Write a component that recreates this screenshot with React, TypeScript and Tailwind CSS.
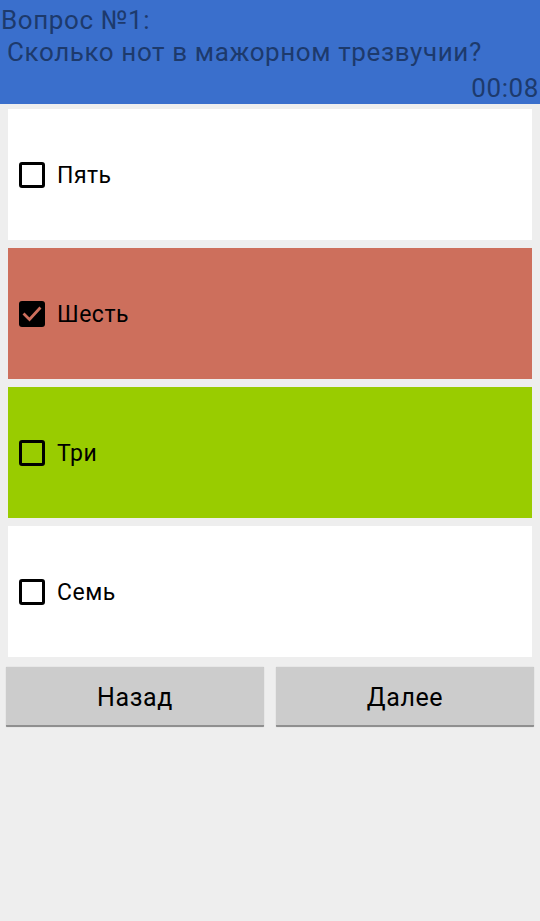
import React from "react";

type Opt = { label: string; bg: string; checked?: boolean };

const options: Opt[] = [
  { label: "Пять", bg: "bg-white" },
  { label: "Шесть", bg: "bg-[#cd6f5c]", checked: true },
  { label: "Три", bg: "bg-[#99cc00]" },
  { label: "Семь", bg: "bg-white" },
];

function Box({ checked }: { checked?: boolean }) {
  if (checked) {
    return (
      <div className="w-[26px] h-[26px] rounded-[3px] bg-black flex items-center justify-center shrink-0">
        <svg width="22" height="22" viewBox="0 0 22 22">
          <path d="M3.5 11.5 L8.5 16.5 L18.5 5.5" fill="none" stroke="#cd6f5c" strokeWidth="2.8" strokeLinecap="square" />
        </svg>
      </div>
    );
  }
  return <div className="w-[26px] h-[26px] rounded-[3px] border-[3px] border-black shrink-0" />;
}

export default function App() {
  return (
    <div className="w-[540px] h-[921px] bg-[#eeeeee] flex flex-col" style={{ fontFamily: "Roboto, 'Noto Sans', sans-serif" }}>
      <div className="h-[104px] bg-[#3a6fcc] text-[#1d3a6c] text-[26px] tracking-[0.6px] leading-[32px] pt-[4px] flex flex-col">
        <div className="pl-[1px]">Вопрос №1:</div>
        <div className="pl-[7px]">Сколько нот в мажорном трезвучии?</div>
        <div className="mt-[4px] text-right pr-[1px]">00:08</div>
      </div>
      <div className="flex flex-col gap-[8px] pt-[5px] px-[8px]">
        {options.map((o) => (
          <div key={o.label} className={`h-[131px] ${o.bg} flex items-center pl-[11px] gap-[12px]`}>
            <Box checked={o.checked} />
            <span className="text-[23px] tracking-[0.5px] text-black pt-[4px]">{o.label}</span>
          </div>
        ))}
      </div>
      <div className="flex gap-[12px] px-[6px] mt-[10px]">
        <button className="flex-1 h-[60px] bg-[#cccccc] border-b-2 border-[#8f8f8f] rounded-[1px] text-[25px] tracking-[0.6px] text-black pt-[3px] shadow-[0_0_1px_rgba(0,0,0,0.3)]">Назад</button>
        <button className="flex-1 h-[60px] bg-[#cccccc] border-b-2 border-[#8f8f8f] rounded-[1px] text-[25px] tracking-[0.6px] text-black pt-[3px] shadow-[0_0_1px_rgba(0,0,0,0.3)]">Далее</button>
      </div>
    </div>
  );
}
